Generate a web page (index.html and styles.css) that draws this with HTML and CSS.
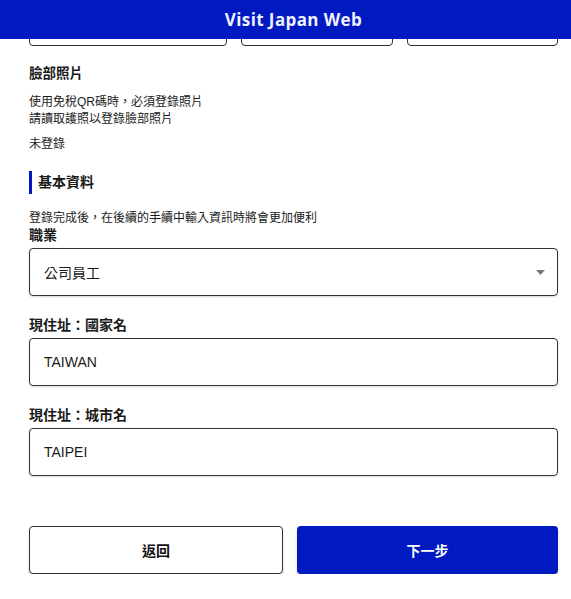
FILE: index.html
```html
<!DOCTYPE html>
<html lang="zh-Hant">
<head>
    <meta charset="UTF-8">
    <meta name="viewport" content="width=device-width, initial-scale=1.0">
    <title>Visit Japan Web</title>
    <link rel="stylesheet" href="styles.css">
</head>
<body>
    <header class="app-header">
        <h1>Visit Japan Web</h1>
    </header>

    <main class="container">
        <div class="date-row">
            <div class="box box-wide"></div>
            <div class="box"></div>
            <div class="box"></div>
        </div>

        <div class="photo-block">
            <h3>臉部照片</h3>
            <p class="desc">使用免稅QR碼時，必須登錄照片<br>請讀取護照以登錄臉部照片</p>
            <p class="desc">未登錄</p>
        </div>

        <h2 class="section-title">基本資料</h2>
        <p class="note">登錄完成後，在後續的手續中輸入資訊時將會更加便利</p>

        <div class="field">
            <label>職業</label>
            <div class="input select">
                <span>公司員工</span>
                <svg class="caret" width="9" height="5" viewBox="0 0 9 5"><path d="M0 0h9L4.5 5z" fill="#777"/></svg>
            </div>
        </div>

        <div class="field">
            <label>現住址：國家名</label>
            <div class="input">TAIWAN</div>
        </div>

        <div class="field">
            <label>現住址：城市名</label>
            <div class="input">TAIPEI</div>
        </div>

        <div class="actions">
            <button class="btn btn-back">返回</button>
            <button class="btn btn-next">下一步</button>
        </div>
    </main>
</body>
</html>
```

FILE: styles.css
```css
body {
    margin: 0;
    font-family: "Liberation Sans", "Noto Sans CJK TC", sans-serif;
    color: #1a1a1a;
    background-color: #fff;
}
.app-header {
    position: fixed;
    top: 0;
    left: 0;
    right: 0;
    height: 39px;
    background-color: #0019c1;
    display: flex;
    align-items: center;
    justify-content: center;
    padding-left: 16px;
    z-index: 10;
}
.app-header h1 {
    margin: 0;
    font-family: "Open Sans", "Noto Sans", sans-serif;
    font-size: 17px;
    font-weight: 700;
    color: #eef0ff;
    letter-spacing: 0.4px;
}
.container {
    padding: 0 13px 0 29px;
    margin-top: -2px;
}
.date-row {
    display: grid;
    grid-template-columns: 198px 152px 1fr;
    gap: 14px;
}
.box {
    height: 46px;
    border: 1px solid #333;
    border-radius: 4px;
}
.photo-block {
    margin-top: 18px;
}
.photo-block h3 {
    margin: 0 0 10px;
    font-size: 13.5px;
    line-height: 20px;
}
.desc {
    margin: 0 0 8px;
    font-size: 12px;
    line-height: 17px;
}
.section-title {
    margin: 18px 0 16px;
    padding-left: 6px;
    border-left: 3px solid #0019c1;
    font-size: 14px;
    line-height: 23px;
}
.note {
    margin: 0;
    font-size: 12px;
    line-height: 16px;
}
.field {
    margin-bottom: 20px;
}
.field label {
    display: block;
    margin-bottom: 4px;
    font-size: 14px;
    font-weight: 700;
    line-height: 18px;
}
.input {
    height: 46px;
    border: 1px solid #333;
    border-radius: 4px;
    box-shadow: 0 1px 2px rgba(0,0,0,0.15);
    display: flex;
    align-items: center;
    padding: 0 14px;
    font-size: 14px;
}
.select {
    justify-content: space-between;
    padding-right: 12px;
}
.caret {
    margin-top: 1px;
}
.actions {
    display: flex;
    gap: 14px;
    margin-top: 50px;
}
.btn {
    height: 48px;
    border-radius: 4px;
    font-family: inherit;
    font-size: 14px;
    font-weight: 700;
    cursor: pointer;
    box-shadow: 0 2px 3px rgba(0,0,0,0.15);
}
.btn-back {
    width: 254px;
    background-color: #fff;
    border: 1px solid #333;
    color: #111;
}
.btn-next {
    flex: 1;
    background-color: #0019c1;
    border: none;
    color: #fff;
}
```
